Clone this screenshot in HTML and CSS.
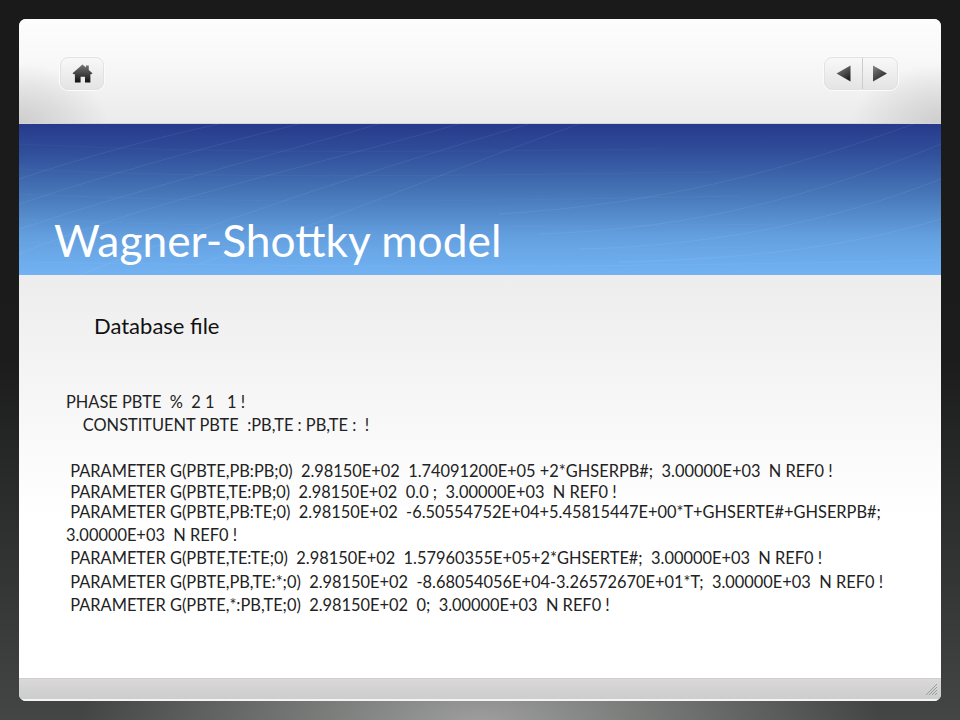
FILE: index.html
```html
<!DOCTYPE html>
<html lang="en">
<head>
<meta charset="utf-8">
<title>Wagner-Shottky model</title>
<link rel="stylesheet" href="styles.css">
</head>
<body>
<main class="slide">
  <header class="toolbar">
    <button class="btn btn-home" aria-label="Home">
      <svg width="21" height="19" viewBox="0 0 22 20"><defs><linearGradient id="ih" x1="0" y1="0" x2="0" y2="1"><stop offset="0" stop-color="#777"/><stop offset="1" stop-color="#111"/></linearGradient></defs><path fill="url(#ih)" d="M11 0.5 14.6 3.6V1.5H17.6V6.2L21.5 9.7 20.2 10.9H19.3V19.5H13.6V13.5H9V19.5H3V10.9H1.8L0.5 9.7Z"/></svg>
    </button>
    <div class="btn btn-nav">
      <span class="nav-cell nav-prev"><svg width="16" height="17" viewBox="0 0 16 17"><defs><linearGradient id="il" x1="0" y1="0" x2="0.6" y2="1"><stop offset="0" stop-color="#888"/><stop offset="1" stop-color="#222"/></linearGradient></defs><path fill="url(#il)" d="M14.5 0.5V16.5L0.5 8.5Z"/></svg></span>
      <span class="nav-cell"><svg width="16" height="17" viewBox="0 0 16 17"><defs><linearGradient id="ir" x1="0" y1="0" x2="0.6" y2="1"><stop offset="0" stop-color="#888"/><stop offset="1" stop-color="#222"/></linearGradient></defs><path fill="url(#ir)" d="M1 0.5V16.5L15 8.5Z"/></svg></span>
    </div>
  </header>
  <section class="band">
    <svg class="streaks" width="922" height="151" viewBox="0 0 922 151" fill="none" stroke="#fff" stroke-width="1">
      <path stroke-opacity=".07" d="M0 130C120 80 300 40 440 0M0 105C120 65 240 35 360 0M0 80C90 50 180 25 280 0M0 55C60 35 130 15 200 0M60 151C220 90 340 50 510 0M180 140C330 90 420 50 560 0"/>
      <path stroke-opacity=".07" d="M480 90C640 80 760 50 922 -10M520 110C680 105 800 70 922 20M560 125C700 122 820 95 922 55M600 138C740 135 840 120 922 95"/>
      <path stroke-opacity=".035" d="M0 20C200 30 400 28 640 25M0 45C200 55 400 52 700 48M0 70C220 80 420 78 720 72M0 95C240 105 440 104 760 100M0 118C260 126 460 128 800 122M0 138C280 142 500 146 922 136"/>
    </svg>
    <h1 class="title">Wagner-Shottky model</h1>
  </section>
  <section class="content">
    <h2 class="subtitle">Database file</h2>
    <div class="db">
      <p class="l1">PHASE PBTE  %  2 1   1 !</p>
      <p class="l2">    CONSTITUENT PBTE  :PB,TE : PB,TE :  !</p>
      <p class="l3 gap"> PARAMETER G(PBTE,PB:PB;0)  2.98150E+02  1.74091200E+05 +2*GHSERPB#;  3.00000E+03  N REF0 !</p>
      <p class="l4"> PARAMETER G(PBTE,TE:PB;0)  2.98150E+02  0.0 ;  3.00000E+03  N REF0 !</p>
      <p class="l4"> PARAMETER G(PBTE,PB:TE;0)  2.98150E+02  -6.50554752E+04+5.45815447E+00*T+GHSERTE#+GHSERPB#;</p>
      <p class="l5">3.00000E+03  N REF0 !</p>
      <p class="l5"> PARAMETER G(PBTE,TE:TE;0)  2.98150E+02  1.57960355E+05+2*GHSERTE#;  3.00000E+03  N REF0 !</p>
      <p class="l5"> PARAMETER G(PBTE,PB,TE:*;0)  2.98150E+02  -8.68054056E+04-3.26572670E+01*T;  3.00000E+03  N REF0 !</p>
      <p class="l5"> PARAMETER G(PBTE,*:PB,TE;0)  2.98150E+02  0;  3.00000E+03  N REF0 !</p>
    </div>
  </section>
  <footer class="status">
    <svg class="grip" width="14" height="14" viewBox="0 0 14 14"><path d="M13 2 2 13M13 5 5 13M13 8 8 13M13 11 11 13" stroke="#9a9a9a" stroke-width="1" fill="none"/></svg>
  </footer>
</main>
</body>
</html>
```
FILE: styles.css
```css
* { box-sizing: border-box; }
html, body { margin: 0; height: 720px; overflow: hidden; }
body {
  padding: 19px 19px 19px;
  background:
    radial-gradient(ellipse 400px 170px at 480px 725px, #9e9f9e 0%, rgba(140,142,140,.75) 40%, rgba(70,72,72,0) 100%),
    linear-gradient(180deg, #1a1a1a 0%, #1c1c1c 50%, #333535 80%, #444646 100%);
  font-family: Lato, "Open Sans", sans-serif;
}
.slide {
  width: 922px;
  height: 682px;
  display: flex;
  flex-direction: column;
  border-radius: 7px;
  overflow: hidden;
  background: #fff;
}
.toolbar {
  height: 105px;
  flex: none;
  display: flex;
  justify-content: space-between;
  align-items: flex-start;
  padding: 38px 43px 0 41px;
  background:
    radial-gradient(ellipse 90px 60px at 0 105px, #cdcdcd 0%, rgba(232,232,232,0) 100%),
    radial-gradient(ellipse 90px 60px at 922px 105px, #cdcdcd 0%, rgba(232,232,232,0) 100%),
    linear-gradient(180deg, #fdfdfd 0%, #f8f8f8 40%, #ebebeb 100%);
  border-bottom: 1px solid #d4d4d8;
}
.btn {
  padding: 0;
  display: flex;
  border: 1px solid #e2e2e2;
  border-radius: 8px;
  background: linear-gradient(180deg, #f8f8f8 0%, #e4e4e4 100%);
  box-shadow: 0 0 0 1px #fbfbfb;
}
.btn-home {
  width: 44px;
  height: 33px;
  align-items: center;
  justify-content: center;
}
.btn-nav { width: 74px; height: 33px; }
.nav-cell { flex: 1; display: flex; align-items: center; justify-content: center; }
.nav-cell.nav-prev { flex: 0 0 37px; }
.nav-cell + .nav-cell { border-left: 1px solid #cccccc; }
.band {
  height: 151px;
  flex: none;
  position: relative;
  display: flex;
  align-items: flex-end;
  padding: 0 0 8px 35px;
  background: linear-gradient(180deg, #273a8b 0%, #31509c 20%, #4a7cbc 50%, #64a0e0 75%, #72b3f3 100%);
}
.streaks { position: absolute; left: 0; top: 0; }
.title {
  position: relative;
  margin: 0;
  font-size: 44.3px;
  font-weight: 400;
  line-height: 54px;
  color: #fff;
}
.content {
  flex: 1;
  background: linear-gradient(180deg, #ededed 0%, #f6f6f6 30%, #fff 60%);
  padding: 38px 0 0 47px;
}
.subtitle {
  margin: 0 0 0 28px;
  font-size: 22px;
  font-weight: 400;
  line-height: 26px;
  color: #111;
}
.db { margin-top: 51px; font-size: 16.4px; color: #222; }
.db p { margin: 0; white-space: pre; line-height: 23.5px; }
.db .l1, .db .l2 { line-height: 23px; }
.db .l3, .db .l4 { line-height: 20.5px; }
.db .gap { margin-top: 25px; }
.status {
  height: 23px;
  flex: none;
  display: flex;
  justify-content: flex-end;
  align-items: flex-end;
  padding: 0 3px 3px 0;
  background: linear-gradient(180deg, #dad8d8 0%, #cdcdcd 100%);
  border-top: 1px solid #cfcfcf;
  border-bottom: 2px solid #f4f4f4;
}
```
